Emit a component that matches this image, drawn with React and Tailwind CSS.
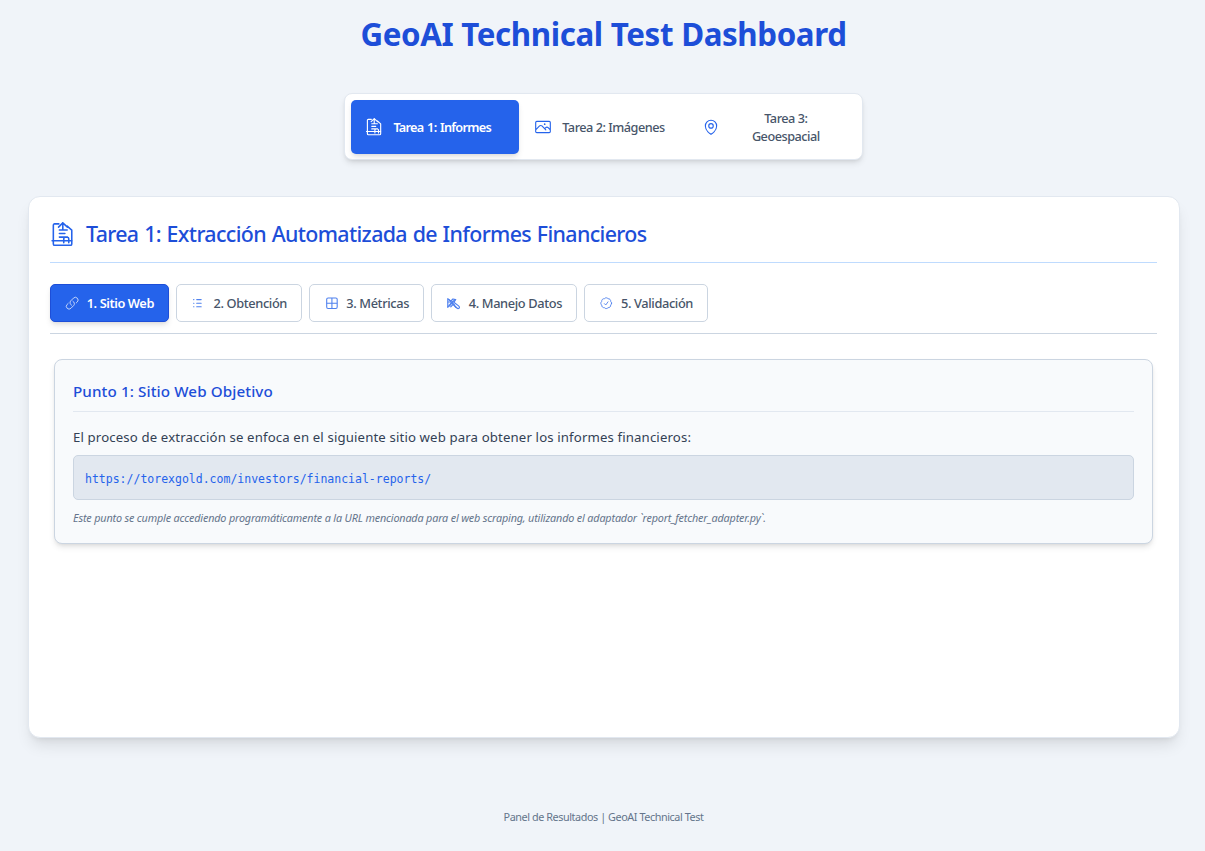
import { HiOutlinePhoto, HiOutlineMapPin, HiOutlineLink, HiOutlineCheckBadge } from "react-icons/hi2";

function ReportIcon({ className }) {
  return (
    <svg viewBox="0 0 24 24" fill="none" stroke="currentColor" strokeWidth="1.5" strokeLinecap="round" strokeLinejoin="round" className={className}>
      <path d="M8.500 1.800H4.400C3.700 1.800 3.200 2.300 3.200 3v18c0 .8.5 1.400 1.300 1.400h15.100c.8 0 1.300-.6 1.300-1.400V7.800L16.500 4" />
      <path d="M8.200 4.900 12.300.8l4.400 4.100M12.300.8v6.600M9 7.600h7.500M9 11.100h5.300M9 14.500h7.800M2 18h18.800M13.200 20v-4c0-.8.6-1.400 1.400-1.400h2c.8 0 1.400.6 1.400 1.400v4" />
    </svg>
  );
}

function ListIcon({ className }) {
  return (
    <svg viewBox="0 0 24 24" fill="none" stroke="currentColor" strokeWidth="1.8" strokeLinecap="round" className={className}>
      <path d="M9.500 6H17M9.500 12H17M9.500 18H17M4.300 6h.6M4.300 12h.6M4.300 18h.6" />
    </svg>
  );
}

function GridIcon({ className }) {
  return (
    <svg viewBox="0 0 24 24" fill="none" stroke="currentColor" strokeWidth="1.8" className={className}>
      <rect x="4.500" y="3.300" width="17.500" height="17.500" rx="2.300" />
      <path d="M13.200 3.300v17.500M4.500 12.200H22" />
    </svg>
  );
}

function ToolsIcon({ className }) {
  return (
    <svg viewBox="0 0 24 24" fill="none" stroke="currentColor" strokeWidth="2" strokeLinecap="round" strokeLinejoin="round" className={className}>
      <path d="M3 18.500V4.500l5 4L11.500 5l4.500 1-3 4.500 8 6c1.600 1.300 1.800 3.200.6 4.100-1.100.9-2.700.4-3.900-1L9 10.500" />
      <path d="m3 18.500 5-6 3-3.500 5-3M5 6l9 9M5.500 17 13 8M3.500 10l5 0 8 9M11.500 14.500l-3.500 3.500" />
    </svg>
  );
}

const mainTabs = [
  { label: "Tarea 1: Informes", Icon: ReportIcon, pad: "pl-[14px]", textPad: "pr-[10px] pl-[6px]", active: true },
  { label: "Tarea 2: Imágenes", Icon: HiOutlinePhoto, pad: "pl-[15px]", textPad: "pr-[5px] pl-[6px]" },
  { label: "Tarea 3: Geoespacial", Icon: HiOutlineMapPin, pad: "pl-[14px]", textPad: "pr-0 pl-[10px]" },
];

const steps = [
  { label: "1. Sitio Web", Icon: HiOutlineLink, width: "w-[119px]", active: true },
  { label: "2. Obtención", Icon: ListIcon, width: "w-[126px]" },
  { label: "3. Métricas", Icon: GridIcon, width: "w-[115px]" },
  { label: "4. Manejo Datos", Icon: ToolsIcon, width: "w-[146px]" },
  { label: "5. Validación", Icon: HiOutlineCheckBadge, width: "w-[124px]" },
];

export default function App() {
  return (
    <div className="flex h-[851px] flex-col overflow-hidden bg-[#f0f4f9] font-['Noto_Sans','Open_Sans',sans-serif]">
      <h1 className="mt-[10px] ml-[2px] text-center text-[31.300px] leading-[48px] font-bold tracking-[-0.400px] text-[#1d4ed8] [word-spacing:0.4px]">
        GeoAI Technical Test Dashboard
      </h1>

      <nav className="mt-[35px] ml-[344px] grid h-[67px] w-[519px] grid-cols-3 rounded-lg border border-[#e2e8f0] bg-white p-[6px] shadow-md">
        {mainTabs.map(({ label, Icon, pad, textPad, active }) => (
          <button
            key={label}
            className={`flex h-[54px] items-center rounded-[5px] pr-[14px] text-[12.700px] leading-[18px] ${pad} ${
              active ? "bg-[#2563eb] font-semibold tracking-[-0.720px] text-white shadow-md [word-spacing:1px]" : "font-medium tracking-[-0.480px] text-[#475569]"
            }`}
          >
            <Icon className={`size-[18px] shrink-0 ${active ? "text-white" : "text-[#2563eb]"}`} />
            <span className={`flex-1 text-center ${textPad}`}>{label}</span>
          </button>
        ))}
      </nav>

      <main className="mt-[36px] ml-[28px] flex h-[542px] w-[1152px] flex-col rounded-xl border border-[#e2e8f0] bg-white px-[21px] shadow-lg">
        <header className="mt-[12px] flex h-[54px] w-[1107px] items-center border-b border-[#bfdbfe] pb-[3px]">
          <ReportIcon className="size-[25px] text-[#2563eb]" />
          <h2 className="ml-[11px] text-[21.400px] leading-[30px] font-medium tracking-[-0.650px] text-[#1d4ed8] [word-spacing:0.8px]">
            Tarea 1: Extracción Automatizada de Informes Financieros
          </h2>
        </header>

        <div className="mt-[21px] flex h-[50px] w-[1107px] gap-[7px] border-b border-[#cbd5e1]">
          {steps.map(({ label, Icon, width, active }) => (
            <button
              key={label}
              className={`flex h-[38px] items-center justify-between rounded-[5px] border px-[14px] text-[12.800px] whitespace-nowrap ${width} ${
                active
                  ? "border-[#1d4ed8] bg-[#2563eb] font-semibold tracking-[-0.420px] text-white shadow-md"
                  : "border-[#cbd5e1] bg-white font-medium tracking-[-0.370px] text-[#475569]"
              }`}
            >
              <Icon className={`size-[14.400px] shrink-0 opacity-80 ${active ? "text-white" : "text-[#2563eb]"}`} />
              <span className="pt-px">{label}</span>
            </button>
          ))}
        </div>

        <section className="mt-[25px] ml-[4px] h-[185px] w-[1099px] rounded-lg border border-[#cbd5e1] bg-[#f8fafc] px-[18px] shadow-md">
          <h3 className="h-[52px] border-b border-[#e2e8f0] pt-[19px] text-[15.200px] leading-[24px] font-medium tracking-[0.100px] text-[#1d4ed8]">
            Punto 1: Sitio Web Objetivo
          </h3>
          <p className="mt-[13px] text-[13.200px] leading-[24px] tracking-[0.140px] text-[#334155]">
            El proceso de extracción se enfoca en el siguiente sitio web para obtener los informes financieros:
          </p>
          <div className="mt-[6px] flex h-[45px] items-center rounded-[5px] border border-[#cbd5e1] bg-[#e2e8f0] px-[11px] pt-[4px] font-['DejaVu_Sans_Mono',monospace] text-[11.500px] text-[#2563eb]">
            https://torexgold.com/investors/financial-reports/
          </div>
          <p className="mt-[9px] text-[10.800px] leading-[18px] tracking-[-0.160px] text-[#64748b] italic">
            Este punto se cumple accediendo programáticamente a la URL mencionada para el web scraping, utilizando el adaptador `report_fetcher_adapter.py`.
          </p>
        </section>
      </main>

      <footer className="mt-[70px] ml-[2px] text-center text-[10.800px] leading-[18px] tracking-[-0.420px] text-[#64748b]">
        Panel de Resultados | GeoAI Technical Test
      </footer>
    </div>
  );
}
